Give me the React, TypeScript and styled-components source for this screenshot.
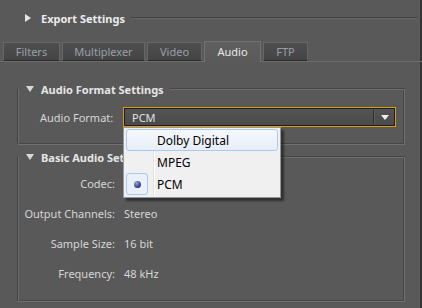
import * as React from 'react';
import styled, { createGlobalStyle } from 'styled-components';

const GlobalStyle = createGlobalStyle`
  html, body {
    margin: 0;
    padding: 0;
    background: #595959;
  }
  body {
    font-family: 'Noto Sans', 'Liberation Sans', sans-serif;
  }
`;

const tabs = [
  { label: 'Filters', width: 57 },
  { label: 'Multiplexer', width: 83 },
  { label: 'Video', width: 55 },
  { label: 'Audio', width: 57, active: true },
  { label: 'FTP', width: 45 },
];

const formats = ['Dolby Digital', 'MPEG', 'PCM'];

const basicRows = [
  { label: 'Codec:', value: '' },
  { label: 'Output Channels:', value: 'Stereo' },
  { label: 'Sample Size:', value: '16 bit' },
  { label: 'Frequency:', value: '48 kHz' },
];

const App = () => {
  return (
    <>
      <GlobalStyle />
      <Panel>
        <Header>
          <TriRight />
          <HeaderTitle>Export Settings</HeaderTitle>
          <HeaderRule />
        </Header>

        <TabBar>
          {tabs.map((t) => (
            <Tab key={t.label} width={t.width} $active={!!t.active}>
              {t.label}
            </Tab>
          ))}
        </TabBar>

        <Group>
          <GroupHead>
            <TriDown />
            <GroupTitle>Audio Format Settings</GroupTitle>
            <GroupRule />
          </GroupHead>
          <FormatBody>
            <FormatLabel>Audio Format:</FormatLabel>
            <SelectWrap>
              <Select>
                <SelectValue>PCM</SelectValue>
                <SelectDivider />
                <SelectArrow />
              </Select>
              <Popup>
                {formats.map((f, i) => (
                  <PopupItem key={f} $hover={i === 0}>
                    <Check $on={f === 'PCM'}>{f === 'PCM' && <Dot />}</Check>
                    <span>{f}</span>
                  </PopupItem>
                ))}
              </Popup>
            </SelectWrap>
          </FormatBody>
        </Group>

        <Group $gap={12}>
          <GroupHead>
            <TriDown />
            <GroupTitle>Basic Audio Settings</GroupTitle>
            <GroupRule />
          </GroupHead>
          <BasicBody>
            {basicRows.map((r) => (
              <React.Fragment key={r.label}>
                <RowLabel>{r.label}</RowLabel>
                <RowValue>{r.value}</RowValue>
              </React.Fragment>
            ))}
          </BasicBody>
        </Group>
      </Panel>
    </>
  );
};

export default App;

const Panel = styled.div`
  width: 422px;
  height: 308px;
  box-sizing: border-box;
  background: #595959;
  box-shadow: inset -2px 0 0 #353535;
  overflow: hidden;
  font-size: 11px;
  color: #d6d6d6;
`;

const Header = styled.div`
  display: flex;
  align-items: center;
  height: 20px;
  margin-top: 8px;
  padding: 0 5px 0 25px;
`;

const TriRight = styled.span`
  width: 0;
  height: 0;
  border-top: 4px solid transparent;
  border-bottom: 4px solid transparent;
  border-left: 6px solid #e6e6e6;
`;

const TriDown = styled.span`
  width: 0;
  height: 0;
  margin-left: 8px;
  border-left: 4px solid transparent;
  border-right: 4px solid transparent;
  border-top: 6px solid #d8d8d8;
`;

const HeaderTitle = styled.span`
  margin-left: 10px;
  font-weight: bold;
  color: #ececec;
  white-space: nowrap;
`;

const HeaderRule = styled.span`
  flex: 1;
  margin-left: 6px;
  height: 0;
  border-top: 1px solid #3f3f3f;
  border-bottom: 1px solid #666;
`;

const TabBar = styled.div`
  display: flex;
  align-items: flex-end;
  gap: 2px;
  height: 20px;
  margin-top: 13px;
  padding-left: 3px;
  border-bottom: 1px solid #6c6c6c;
`;

const Tab = styled.div<{ width: number; $active: boolean }>`
  box-sizing: border-box;
  width: ${(p) => p.width}px;
  height: ${(p) => (p.$active ? 21 : 19)}px;
  margin-bottom: ${(p) => (p.$active ? -1 : 0)}px;
  display: flex;
  align-items: center;
  justify-content: center;
  border: 1px solid ${(p) => (p.$active ? '#727272' : '#676767')};
  border-bottom: ${(p) => (p.$active ? 'none' : '1px solid #2c2c2c')};
  background: ${(p) =>
    p.$active
      ? 'linear-gradient(#606060, #5a5a5a)'
      : 'linear-gradient(#4e4e4e, #454545)'};
  color: ${(p) => (p.$active ? '#e8e8e8' : '#97a0aa')};
  padding-bottom: ${(p) => (p.$active ? 1 : 0)}px;
`;

const Group = styled.div<{ $gap?: number }>`
  display: flex;
  flex-direction: column;
  margin: ${(p) => p.$gap ?? 27}px 17px 0;
  border: 1px solid #707070;
  border-left-color: #434343;
  border-top: none;
  box-shadow: inset 1px 0 0 #6c6c6c, inset -1px -1px 0 #474747;
`;

const GroupHead = styled.div`
  display: flex;
  align-items: center;
  height: 20px;
  margin: -10px -1px 0 0;
`;

const GroupTitle = styled.span`
  margin-left: 7px;
  font-weight: bold;
  color: #e6e6e6;
  white-space: nowrap;
`;

const GroupRule = styled.span`
  flex: 1;
  margin-left: 6px;
  height: 0;
  border-top: 1px solid #454545;
  border-bottom: 1px solid #6e6e6e;
`;

const FormatBody = styled.div`
  display: flex;
  align-items: center;
  padding: 8px 8px 17px 22px;
`;

const FormatLabel = styled.span`
  width: 83px;
`;

const SelectWrap = styled.div`
  position: relative;
  flex: 1;
`;

const Select = styled.div`
  box-sizing: border-box;
  height: 20px;
  display: flex;
  align-items: center;
  border: 1px solid #d69e16;
  box-shadow: inset 0 0 0 1px #1d1d1d;
  background: linear-gradient(#555, #4a4a4a);
  padding: 0 6px 0 8px;
  color: #e2e2e2;
`;

const SelectValue = styled.span`
  flex: 1;
`;

const SelectDivider = styled.span`
  width: 1px;
  height: 14px;
  background: #2e2e2e;
  border-right: 1px solid #5e5e5e;
`;

const SelectArrow = styled.span`
  margin-left: 6px;
  width: 0;
  height: 0;
  border-left: 4px solid transparent;
  border-right: 4px solid transparent;
  border-top: 5px solid #f0f0f0;
`;

const Popup = styled.div`
  position: absolute;
  top: 100%;
  left: 0;
  z-index: 2;
  width: 158px;
  box-sizing: border-box;
  padding: 1px 2px 2px;
  background: #f0f0f0;
  border: 1px solid #979797;
  box-shadow: 3px 3px 2px rgba(0, 0, 0, 0.45);
  font-size: 12px;
  color: #000;

  &::before {
    content: '';
    position: absolute;
    top: 1px;
    bottom: 1px;
    left: 29px;
    width: 1px;
    background: #e2e3e3;
    border-right: 1px solid #fff;
  }
`;

const PopupItem = styled.div<{ $hover: boolean }>`
  position: relative;
  z-index: 1;
  box-sizing: border-box;
  height: 22px;
  display: flex;
  align-items: center;
  border: 1px solid ${(p) => (p.$hover ? '#a9caf0' : 'transparent')};
  border-radius: 3px;
  background: ${(p) => (p.$hover ? 'linear-gradient(#f5f8fd, #e7eef9)' : 'transparent')};
`;

const Check = styled.span<{ $on: boolean }>`
  box-sizing: border-box;
  width: 22px;
  height: 22px;
  margin: -1px 9px -1px -1px;
  display: flex;
  align-items: center;
  justify-content: center;
  border: 1px solid ${(p) => (p.$on ? '#a9caf0' : 'transparent')};
  border-radius: 3px;
  background: ${(p) => (p.$on ? '#e9f0fa' : 'transparent')};
`;

const Dot = styled.span`
  width: 7px;
  height: 7px;
  border-radius: 50%;
  background: radial-gradient(circle at 35% 30%, #9aa6da, #2b3680 70%);
`;

const BasicBody = styled.div`
  display: grid;
  grid-template-columns: 97px 1fr;
  grid-auto-rows: 22px;
  column-gap: 9px;
  row-gap: 8px;
  align-items: center;
  padding: 5px 0 17px;
`;

const RowLabel = styled.span`
  text-align: right;
  white-space: nowrap;
`;

const RowValue = styled.span`
  white-space: nowrap;
`;
